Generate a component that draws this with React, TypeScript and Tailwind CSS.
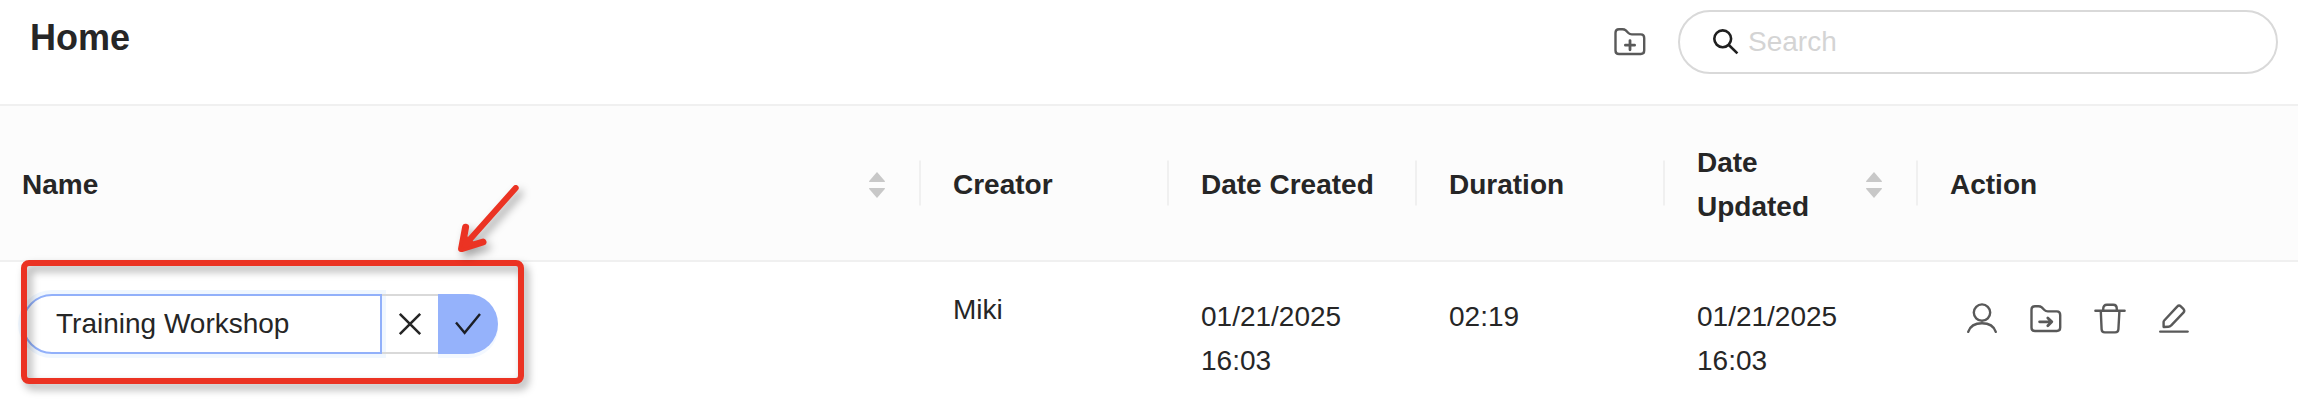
import { useState } from "react";

function Sorter() {
  return (
    <svg className="w-[18px] h-[26px] shrink-0" viewBox="0 0 18 26" fill="#c8c8c8" aria-hidden="true">
      <path d="M9 0 L16.8 9 Q17.4 10 16.4 10 H1.6 Q0.6 10 1.2 9 Z" />
      <path d="M9 26 L16.8 17 Q17.4 16 16.4 16 H1.6 Q0.6 16 1.2 17 Z" />
    </svg>
  );
}

const iconProps = {
  className: "w-8 h-8",
  viewBox: "0 0 32 32",
  fill: "none",
  stroke: "#595959",
  strokeWidth: 2.4,
  strokeLinecap: "round" as const,
  strokeLinejoin: "round" as const,
  "aria-hidden": true,
};

const folder =
  "M1.5 24.4 V6.8 Q1.5 3.2 5 3.2 H8.4 Q10.4 3.2 11.8 4.4 L14.4 7 Q15.8 8.4 17.8 8.4 H26.8 Q30.2 8.4 30.2 12 V24.6 Q30.2 28 26.8 28 H5 Q1.5 28 1.5 24.4 Z";

function FolderPlusIcon() {
  return (
    <svg {...iconProps}>
      <path d={folder} />
      <path strokeWidth={2.8} d="M16 14.6 V23.8 M11.4 19.2 H20.6" />
    </svg>
  );
}

function FolderMoveIcon() {
  return (
    <svg {...iconProps}>
      <path d={folder} />
      <path strokeWidth={2.8} d="M9.6 18.8 H21.8 M17.8 15 L21.8 18.8 L17.8 22.8" />
    </svg>
  );
}

function UserIcon() {
  return (
    <svg {...iconProps}>
      <circle cx="16" cy="9.6" r="8.2" />
      <path d="M2.2 28.8 C4 23.4 9.4 20.2 16 20.2 S28 23.4 29.8 28.8" />
    </svg>
  );
}

function TrashIcon() {
  return (
    <svg {...iconProps}>
      <path d="M1.4 7.8 H30.6" />
      <path d="M9.2 7.4 V6 Q9.2 1.8 13 1.8 H19.2 Q22.8 1.8 22.8 6 V7.4" />
      <path d="M6.8 8.4 L7.6 26.2 Q7.8 29.4 10.8 29.4 H21.2 Q24.2 29.4 24.4 26.2 L25.4 8.4" />
    </svg>
  );
}

function EditIcon() {
  return (
    <svg {...iconProps}>
      <path d="M2.2 28.6 H29.6" />
      <path d="M6 17.8 L19.4 3.4 Q21 1.6 22.8 3.4 L25.6 6.2 Q27 7.8 25.4 9.6 L13 22.6 Q12 23.8 10.4 23.8 L5.6 24 L5.6 19 Q5.6 18.2 6 17.8 Z" />
    </svg>
  );
}

const actions = [
  { label: "Assign owner", icon: <UserIcon /> },
  { label: "Move to folder", icon: <FolderMoveIcon /> },
  { label: "Delete", icon: <TrashIcon /> },
  { label: "Rename", icon: <EditIcon /> },
];

const columns = [
  { title: "Name", sortable: true },
  { title: "Creator" },
  { title: "Date Created" },
  { title: "Duration" },
  { title: "Date Updated", sortable: true },
  { title: "Action" },
];

function NameEditor() {
  const [name, setName] = useState("Training Workshop");
  return (
    <div className="relative flex h-[60px] w-[476px]">
      <input
        aria-label="Name"
        value={name}
        onChange={(e) => setName(e.target.value)}
        className="min-w-0 flex-1 rounded-l-full border-2 border-[#91b0fa] bg-white px-8 shadow-[0_0_0_4px_#f0f7ff] outline-none"
      />
      <button aria-label="Cancel" className="grid w-14 place-items-center border-y-2 border-[#d9d9d9]">
        <svg className="w-6 h-6" viewBox="0 0 24 24" fill="none" stroke="#262626" strokeWidth="2.6" aria-hidden="true">
          <path d="M1.8 1.8 L22.2 22.2 M22.2 1.8 L1.8 22.2" />
        </svg>
      </button>
      <button
        aria-label="Save"
        className="grid w-[60px] place-items-center rounded-r-full bg-[#95b2fb] shadow-[0_4px_0_#f3f8ff]"
      >
        <svg className="w-[26px] h-6" viewBox="0 0 26 24" fill="none" stroke="#1c1f26" strokeWidth="2.4" aria-hidden="true">
          <path d="M1 10.6 L9.6 20.8 L25 2" />
        </svg>
      </button>
      {/* callout drawn over the editor */}
      <div className="pointer-events-none absolute -top-[34px] -right-[26px] -bottom-[30px] -left-px rounded-lg border-[6px] border-[#eb3323] drop-shadow-[4px_5px_4px_rgba(0,0,0,0.35)]" />
      <svg
        className="pointer-events-none absolute -top-[114px] -right-[34px] w-20 h-20 drop-shadow-[4px_5px_4px_rgba(0,0,0,0.35)]"
        viewBox="0 0 80 80"
        fill="none"
        stroke="#eb3323"
        strokeLinecap="round"
        strokeLinejoin="round"
        aria-hidden="true"
      >
        <path strokeWidth="6" d="M63.7 8 L12 66" />
        <path strokeWidth="7" d="M13.6 47.2 L9.6 68.6 L31 62" />
        <path fill="#eb3323" d="M9.6 68.6 L12 55 L17 58 L21 61.5 L23 65 Z" />
      </svg>
    </div>
  );
}

export default function App() {
  return (
    <main className="min-h-screen overflow-hidden bg-white font-['Liberation_Sans',Arial,sans-serif] text-[28px] leading-[44px] text-[#262626]">
      <header className="flex h-[104px] items-start justify-between pl-[30px] pr-5 pt-[10px]">
        <h1 className="text-4xl leading-[56px] font-bold">Home</h1>
        <div className="flex items-center gap-8">
          <button aria-label="New folder">
            <FolderPlusIcon />
          </button>
          <label className="flex h-16 w-[600px] items-center gap-2 rounded-full border-2 border-[#d9d9d9] px-8">
            <svg className="w-7 h-7 shrink-0" viewBox="0 0 28 28" fill="none" stroke="#1f1f1f" strokeWidth="2.6" aria-hidden="true">
              <circle cx="10.7" cy="10.8" r="8.4" />
              <path d="M16.6 16.8 L25.4 25.4" />
            </svg>
            <input
              type="search"
              aria-label="Search"
              placeholder="Search"
              className="min-w-0 flex-1 outline-none placeholder:text-[#d4d4d4]"
            />
          </label>
        </div>
      </header>

      <table className="w-full table-fixed border-t-2 border-[#f0f0f0] text-left">
        <colgroup>
          <col />
          <col className="w-[248px]" />
          <col className="w-[248px]" />
          <col className="w-[248px]" />
          <col className="w-[253px]" />
          <col className="w-[380px]" />
        </colgroup>
        <thead>
          <tr className="h-[156px] border-b-2 border-[#f0f0f0] bg-[#fcfcfc]">
            {columns.map((col) => (
              <th
                key={col.title}
                className="relative px-8 pt-[3px] font-bold first:pl-[22px] after:absolute after:top-1/2 after:right-0 after:h-[45px] after:w-0.5 after:-translate-y-1/2 after:bg-[#f0f0f0] last:after:hidden"
              >
                <div className="flex items-center justify-between gap-2">
                  {col.title}
                  {col.sortable && (
                    <button aria-label={`Sort by ${col.title}`} className="mr-[3px]">
                      <Sorter />
                    </button>
                  )}
                </div>
              </th>
            ))}
          </tr>
        </thead>
        <tbody>
          <tr className="align-top">
            <td className="py-8 pl-[22px]">
              <NameEditor />
            </td>
            <td className="px-8 py-8 leading-8">Miki</td>
            <td className="px-8 py-[33px]">01/21/2025 16:03</td>
            <td className="px-8 py-[33px]">02:19</td>
            <td className="px-8 py-[33px]">01/21/2025 16:03</td>
            <td className="px-8 py-[33px]">
              <div className="flex gap-8 px-4 pt-2">
                {actions.map((action) => (
                  <button key={action.label} aria-label={action.label}>
                    {action.icon}
                  </button>
                ))}
              </div>
            </td>
          </tr>
        </tbody>
      </table>
    </main>
  );
}
